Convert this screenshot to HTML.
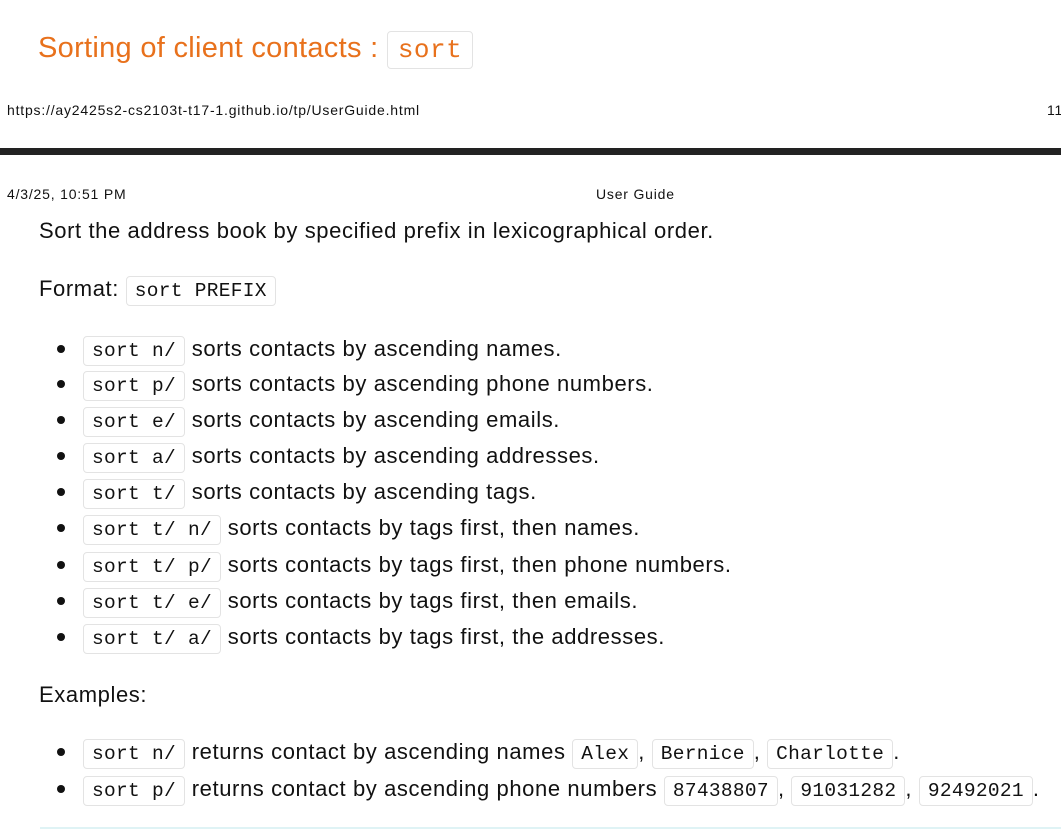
<!DOCTYPE html>
<html><head><meta charset="utf-8"><style>
body{margin:0;width:1061px;height:829px;overflow:hidden;background:#fff;position:relative;font-family:"Liberation Sans",sans-serif;color:#111}
.a{position:absolute;white-space:nowrap}
.t{font-size:22px;line-height:30px;height:30px;letter-spacing:0.6px}
code{font-family:"Liberation Mono",monospace;font-size:19.5px;border:1px solid #e3e3e3;border-radius:4px;padding:3px 8px;background:#fff;color:#111;letter-spacing:0.3px}
.b{position:absolute;width:8px;height:8px;border-radius:50%;background:#111}
.s{font-size:14px;letter-spacing:0.8px}
</style></head><body>
<div class="a" style="left:38px;top:28px;font-size:29px;color:#e8711c;line-height:40px;letter-spacing:0.3px">Sorting of client contacts : <code style="font-size:26px;color:#e8711c;padding:3px 10px;letter-spacing:0.5px">sort</code></div>
<div class="a s" style="left:7px;top:102px">https://ay2425s2-cs2103t-t17-1.github.io/tp/UserGuide.html</div>
<div class="a s" style="left:1047px;top:102px">11</div>
<div class="a" style="left:0;top:148px;width:1061px;height:7px;background:#222"></div>
<div class="a s" style="left:7px;top:186px">4/3/25, 10:51 PM</div>
<div class="a s" style="left:596px;top:186px">User Guide</div>
<div class="a t" style="left:39px;top:216px">Sort the address book by specified prefix in lexicographical order.</div>
<div class="a t" style="left:39px;top:274px">Format: <code>sort PREFIX</code></div>

<div class="b" style="left:57px;top:345px"></div><div class="a t" style="left:83px;top:334px"><code>sort n/</code> sorts contacts by ascending names.</div>
<div class="b" style="left:57px;top:380px"></div><div class="a t" style="left:83px;top:369px"><code>sort p/</code> sorts contacts by ascending phone numbers.</div>
<div class="b" style="left:57px;top:416px"></div><div class="a t" style="left:83px;top:405px"><code>sort e/</code> sorts contacts by ascending emails.</div>
<div class="b" style="left:57px;top:452px"></div><div class="a t" style="left:83px;top:441px"><code>sort a/</code> sorts contacts by ascending addresses.</div>
<div class="b" style="left:57px;top:488px"></div><div class="a t" style="left:83px;top:477px"><code>sort t/</code> sorts contacts by ascending tags.</div>
<div class="b" style="left:57px;top:524px"></div><div class="a t" style="left:83px;top:513px"><code>sort t/ n/</code> sorts contacts by tags first, then names.</div>
<div class="b" style="left:57px;top:561px"></div><div class="a t" style="left:83px;top:550px"><code>sort t/ p/</code> sorts contacts by tags first, then phone numbers.</div>
<div class="b" style="left:57px;top:597px"></div><div class="a t" style="left:83px;top:586px"><code>sort t/ e/</code> sorts contacts by tags first, then emails.</div>
<div class="b" style="left:57px;top:633px"></div><div class="a t" style="left:83px;top:622px"><code>sort t/ a/</code> sorts contacts by tags first, the addresses.</div>

<div class="a t" style="left:39px;top:680px">Examples:</div>
<div class="b" style="left:57px;top:748px"></div><div class="a t" style="left:83px;top:737px"><code>sort n/</code> returns contact by ascending names <code>Alex</code>, <code>Bernice</code>, <code>Charlotte</code>.</div>
<div class="b" style="left:57px;top:785px"></div><div class="a t" style="left:83px;top:774px"><code>sort p/</code> returns contact by ascending phone numbers <code>87438807</code>, <code>91031282</code>, <code>92492021</code>.</div>
<div class="a" style="left:40px;top:827px;width:1021px;height:2px;background:#dff3f5"></div>
</body></html>
